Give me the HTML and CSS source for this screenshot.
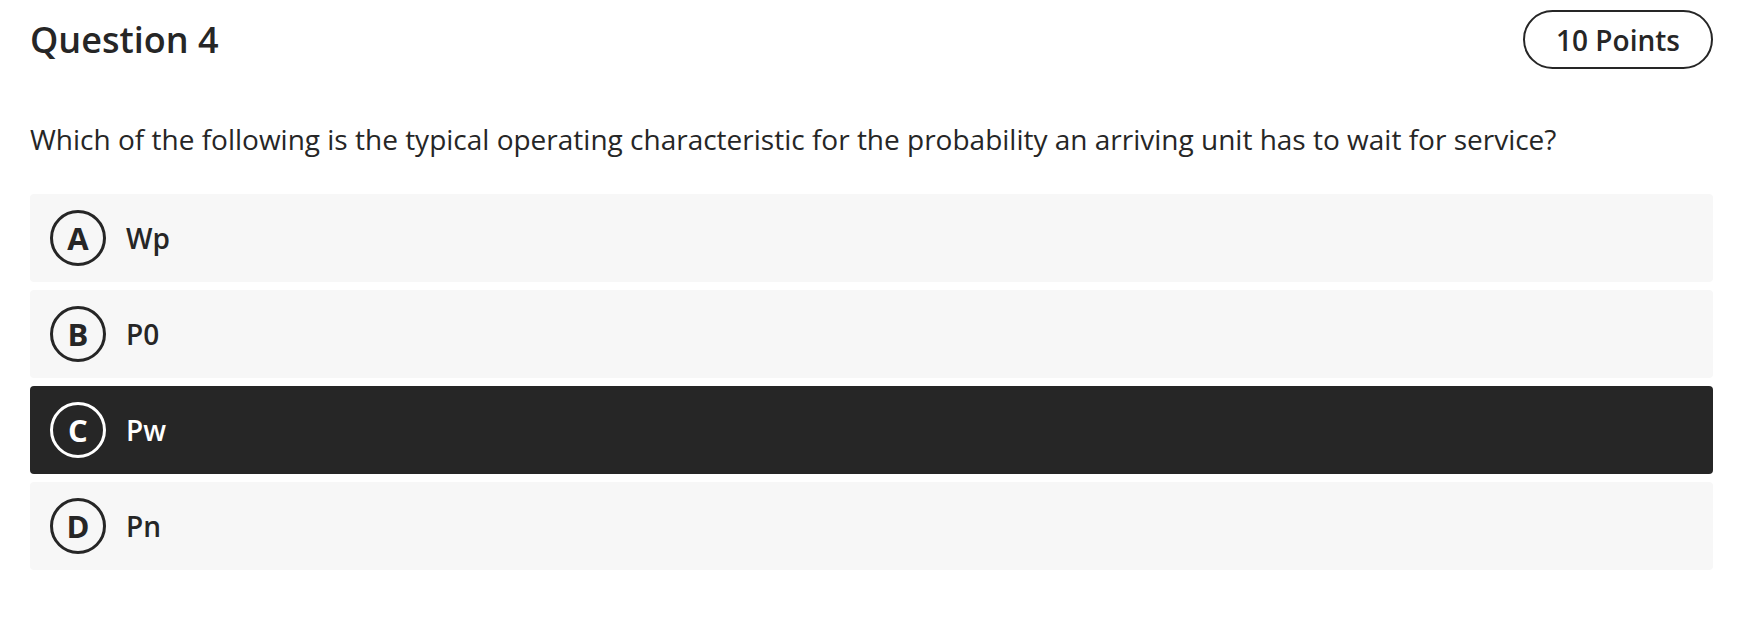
FILE: index.html
```html
<!DOCTYPE html>
<html lang="en">
<head>
<meta charset="utf-8">
<title>Question 4</title>
<link rel="stylesheet" href="styles.css">
</head>
<body>
<div class="question">
  <div class="header">
    <h2 class="title">Question 4</h2>
    <span class="points">10 Points</span>
  </div>
  <p class="prompt">Which of the following is the typical operating characteristic for the probability an arriving unit has to wait for service?</p>
  <ul class="options">
    <li class="option"><span class="letter">A</span><span class="label">Wp</span></li>
    <li class="option"><span class="letter">B</span><span class="label">P0</span></li>
    <li class="option selected"><span class="letter">C</span><span class="label">Pw</span></li>
    <li class="option"><span class="letter">D</span><span class="label">Pn</span></li>
  </ul>
</div>
</body>
</html>
```
FILE: styles.css
```css
* { box-sizing: border-box; }
html, body { margin: 0; padding: 0; background: #fff; }
body {
  font-family: "Open Sans", "Noto Sans", sans-serif;
  color: #262626;
}
.question {
  padding: 10px 37px 0 30px;
}
.header {
  display: flex;
  justify-content: space-between;
  align-items: center;
  height: 59px;
}
.title {
  margin: 0;
  font-size: 36px;
  font-weight: 600;
  line-height: 1;
}
.points {
  display: flex;
  align-items: center;
  justify-content: center;
  width: 190px;
  height: 59px;
  border: 2px solid #262626;
  border-radius: 30px;
  font-size: 28px;
  font-weight: 600;
}
.prompt {
  margin: 50px 0 0 0;
  font-size: 28px;
  line-height: 40px;
  font-weight: 400;
}
.options {
  list-style: none;
  margin: 35px 0 0 0;
  padding: 0;
  display: flex;
  flex-direction: column;
  gap: 8px;
}
.option {
  display: flex;
  align-items: center;
  gap: 20px;
  height: 88px;
  padding: 0 20px;
  background: #f7f7f7;
  border-radius: 4px;
}
.option.selected {
  background: #262626;
  color: #fff;
}
.letter {
  display: flex;
  align-items: center;
  justify-content: center;
  width: 56px;
  height: 56px;
  border: 3.5px solid currentColor;
  border-radius: 50%;
  font-size: 31px;
  font-weight: 700;
}
.label {
  font-size: 28px;
  font-weight: 600;
}
```
